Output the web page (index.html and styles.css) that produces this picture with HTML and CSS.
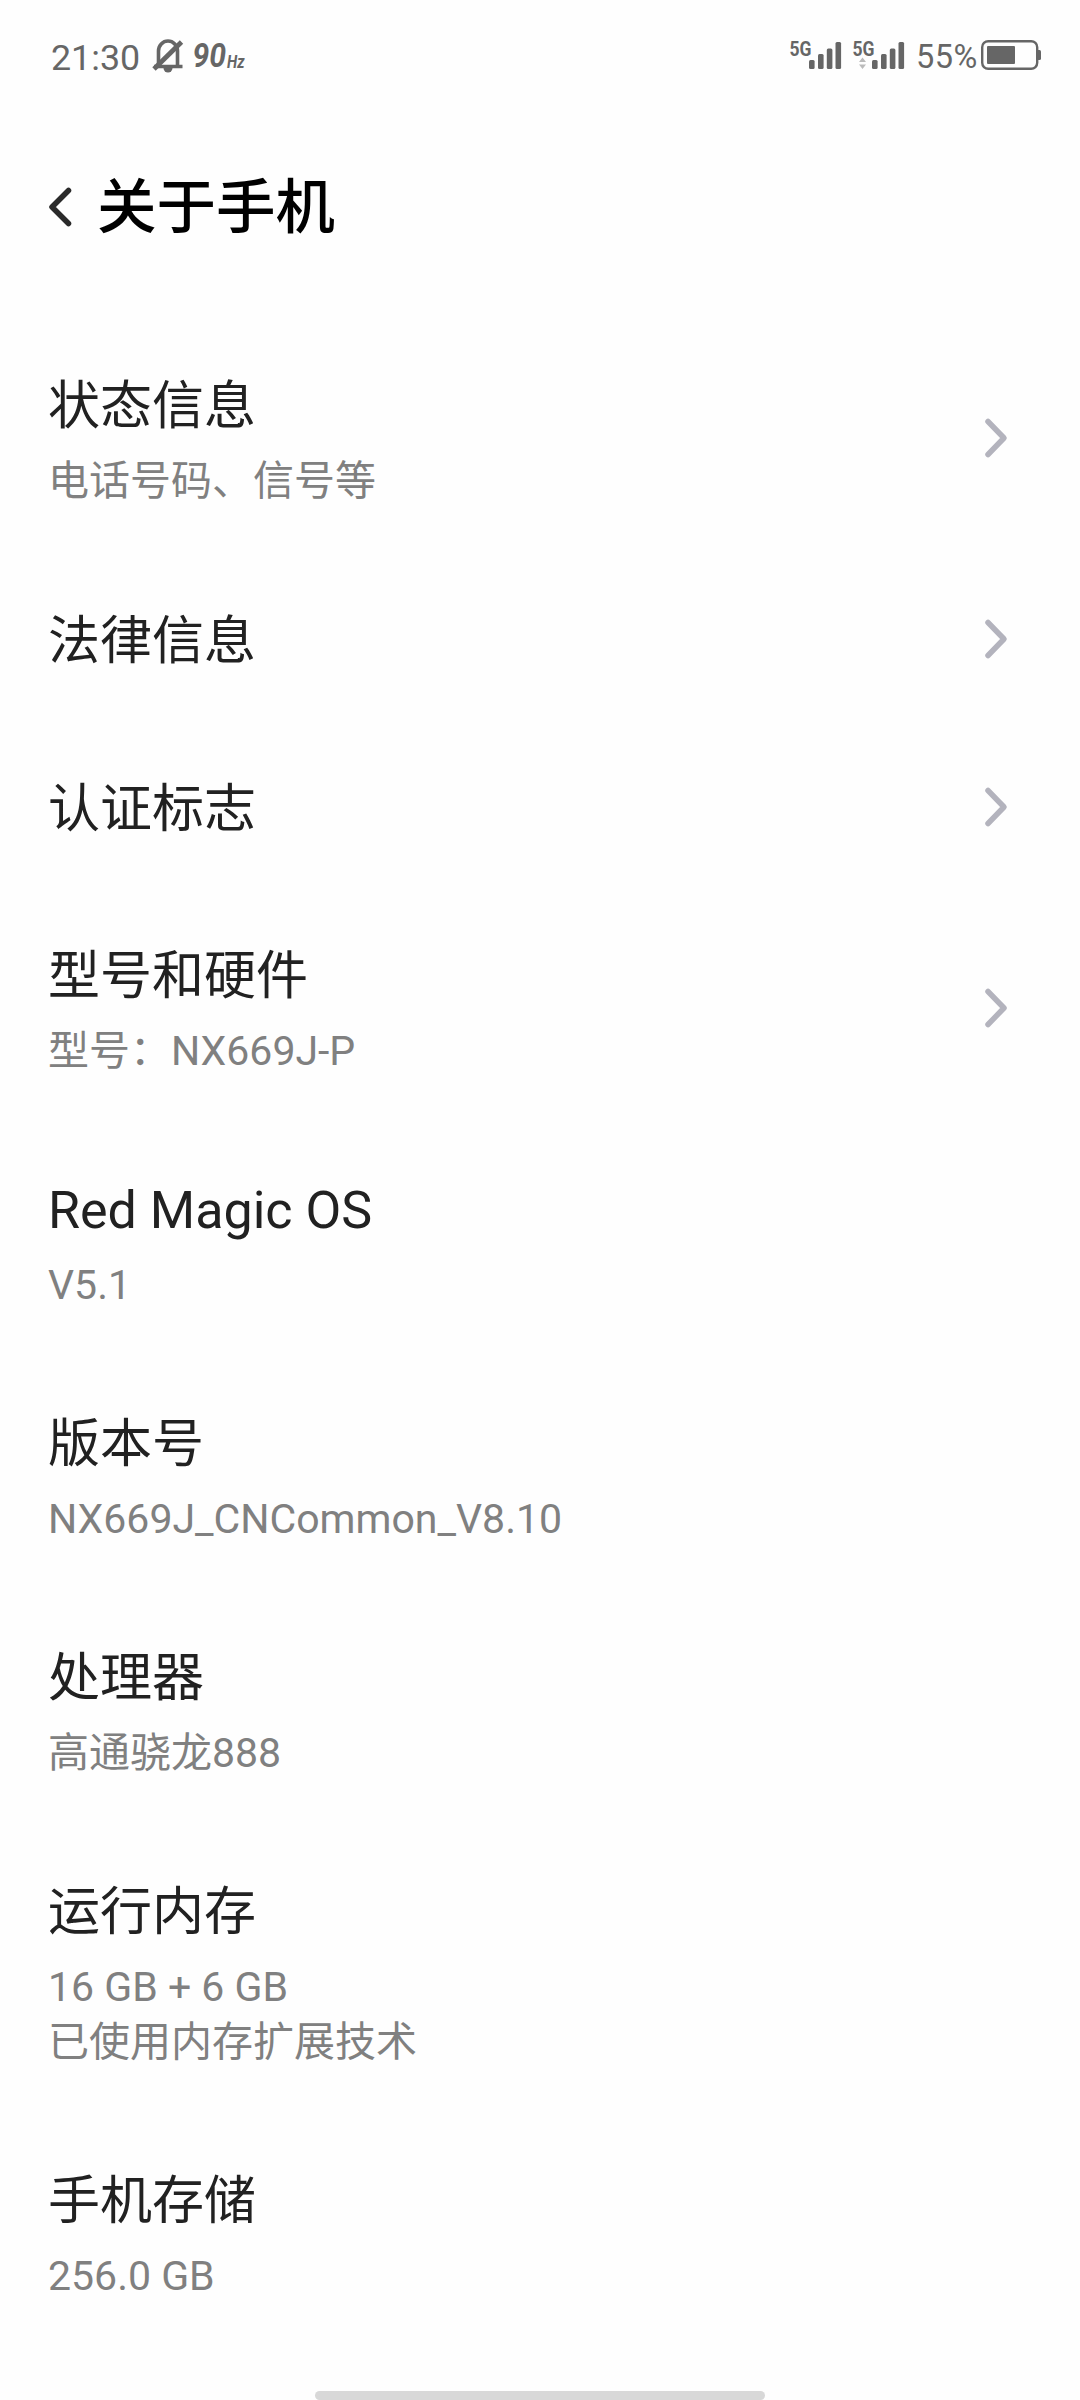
FILE: index.html
```html
<!DOCTYPE html>
<html lang="zh-CN">
<head>
<meta charset="utf-8">
<title>关于手机</title>
<link rel="stylesheet" href="styles.css">
</head>
<body>
<div class="screen">
  <div class="status-bar">
    <div class="status-left">
      <span class="clock">21:30</span>
      <svg class="icon-bell" width="32" height="36" viewBox="0 0 32 36" fill="none" stroke="#666" stroke-width="3.6">
        <path d="M5.500 28V13a9.5 10 0 0 1 19 0V28M1 28.5H29.500"/>
        <path d="M10.500 30a4.5 4.5 0 0 0 9 0z" fill="#666" stroke="none"/>
        <path d="M1 31L28.500 4" stroke-width="4.8"/>
      </svg>
      <svg class="icon-rate" width="54" height="36" viewBox="0 0 54 36" fill="#666">
        <text class="rate-value" x="-0.500" y="29" textLength="33.500" lengthAdjust="spacingAndGlyphs">90</text>
        <text class="rate-unit" x="34" y="29.500" textLength="17.5" lengthAdjust="spacingAndGlyphs">Hz</text>
      </svg>
    </div>
    <div class="status-right">
      <svg class="icon-signal" width="52" height="36" viewBox="0 -4 52 36" fill="#666">
        <text class="net" x="-0.500" y="16" textLength="22" lengthAdjust="spacingAndGlyphs">5G</text>
        <rect x="19" y="20" width="5.6" height="9" rx="1.5"/><rect x="28" y="14" width="5.6" height="15" rx="1.5"/><rect x="36.8" y="8.5" width="5.6" height="20.500" rx="1.5"/><rect x="45.500" y="2" width="5.6" height="27" rx="1.5"/>
      </svg>
      <svg class="icon-signal" width="52" height="36" viewBox="0 -4 52 36" fill="#666">
        <text class="net" x="-0.500" y="16" textLength="22" lengthAdjust="spacingAndGlyphs">5G</text>
        <path d="M6 22l3.500-4.500 3.500 4.500zM6 24.500h7l-3.500 4.500z" fill="#bbb"/>
        <rect x="19" y="20" width="5.6" height="9" rx="1.5"/><rect x="28" y="14" width="5.6" height="15" rx="1.5"/><rect x="36.8" y="8.5" width="5.6" height="20.500" rx="1.5"/><rect x="45.500" y="2" width="5.6" height="27" rx="1.5"/>
      </svg>
      <span class="percent">55%</span>
      <svg class="icon-battery" width="60" height="30" viewBox="0 0 60 30" fill="#666">
        <rect x="1.200" y="1.200" width="55" height="27.600" rx="6" fill="none" stroke="#666" stroke-width="2.400"/>
        <rect x="6" y="6" width="28" height="18" rx="1"/>
        <path d="M57 10h1.500q1.500 0 1.500 1.500v7q0 1.500-1.500 1.500H57z"/>
      </svg>
    </div>
  </div>

  <header class="header">
    <svg width="24" height="40" viewBox="0 0 24 40" fill="none" stroke="#2a2a2a" stroke-width="5.500" stroke-linecap="round" stroke-linejoin="round"><path d="M20.500 3.500L4 20L20.500 36.500"/></svg>
    <h1 class="page-title">关于手机</h1>
  </header>

  <main class="list">
    <div class="item item-double">
      <div class="text"><div class="title">状态信息</div><div class="sub">电话号码、信号等</div></div>
      <svg class="chevron" viewBox="0 0 24 40"><path d="M4 3.500L20 20L4 36.500"/></svg>
    </div>
    <div class="item item-single">
      <div class="text"><div class="title">法律信息</div></div>
      <svg class="chevron" viewBox="0 0 24 40"><path d="M4 3.500L20 20L4 36.500"/></svg>
    </div>
    <div class="item item-single">
      <div class="text"><div class="title">认证标志</div></div>
      <svg class="chevron" viewBox="0 0 24 40"><path d="M4 3.500L20 20L4 36.500"/></svg>
    </div>
    <div class="item item-double">
      <div class="text"><div class="title">型号和硬件</div><div class="sub">型号：NX669J-P</div></div>
      <svg class="chevron" viewBox="0 0 24 40"><path d="M4 3.500L20 20L4 36.500"/></svg>
    </div>
    <div class="item item-double">
      <div class="text"><div class="title">Red Magic OS</div><div class="sub">V5.1</div></div>
    </div>
    <div class="item item-double">
      <div class="text"><div class="title">版本号</div><div class="sub">NX669J_CNCommon_V8.10</div></div>
    </div>
    <div class="item item-double">
      <div class="text"><div class="title">处理器</div><div class="sub">高通骁龙888</div></div>
    </div>
    <div class="item item-triple">
      <div class="text"><div class="title">运行内存</div><div class="sub">16 GB + 6 GB<br>已使用内存扩展技术</div></div>
    </div>
    <div class="item item-double">
      <div class="text"><div class="title">手机存储</div><div class="sub">256.0 GB</div></div>
    </div>
  </main>

  <div class="home-bar"></div>
</div>
</body>
</html>
```
FILE: styles.css
```css
* {
  box-sizing: border-box;
}

body {
  margin: 0;
  background: #fefefe;
  font-family: Roboto, "Noto Sans CJK SC", sans-serif;
  color: #212121;
}

.screen {
  display: flex;
  flex-direction: column;
  width: 1080px;
  height: 2400px;
  overflow: hidden;
}

.status-bar {
  display: flex;
  justify-content: space-between;
  height: 110px;
  padding: 0 39px 0 51px;
  color: #666;
}

.status-left,
.status-right {
  display: flex;
  align-items: flex-start;
}

svg {
  overflow: visible;
}

.clock {
  width: 102px;
  padding-top: 38px;
  font-size: 35.8px;
  line-height: 41px;
  white-space: nowrap;
}

.icon-bell {
  margin-top: 38px;
}

.icon-rate {
  margin: 38px 0 0 8px;
}

.rate-value {
  font-size: 33.5px;
  font-weight: 700;
  font-style: italic;
}

.rate-unit {
  font-size: 18px;
  font-weight: 700;
  font-style: italic;
}

.icon-signal {
  margin: 36px 11px 0 0;
}

.net {
  font-size: 19.5px;
  font-weight: 700;
}

.percent {
  width: 65px;
  padding-top: 38px;
  font-size: 32.5px;
  font-weight: 400;
  line-height: 38px;
  letter-spacing: 0.5px;
  white-space: nowrap;
}

.icon-battery {
  margin-top: 40px;
}

.header {
  display: flex;
  align-items: center;
  gap: 25px;
  height: 211px;
  padding: 0 0 18px 48px;
}

.page-title {
  margin: 0;
  padding-top: 3px;
  font-size: 59.5px;
  font-weight: 500;
  line-height: 80px;
  color: #000;
}

.list {
  flex: 1;
}

.item {
  display: flex;
  justify-content: space-between;
  align-items: center;
  padding: 0 72px 0 48px;
}

.item-single {
  height: 168px;
}

.item-double {
  height: 234px;
}

.item-triple {
  height: 289px;
}

.text {
  align-self: flex-start;
  padding-top: 56px;
}

.item-single .text {
  padding-top: 57px;
}

.title {
  font-size: 52px;
  line-height: 60px;
}

.sub {
  margin-top: 17px;
  font-size: 41px;
  line-height: 55px;
  color: #808080;
}

.chevron {
  width: 24px;
  height: 40px;
  fill: none;
  stroke: #b3b3bd;
  stroke-width: 5.5;
  stroke-linecap: round;
  stroke-linejoin: round;
}

.home-bar {
  align-self: center;
  width: 450px;
  height: 9px;
  border-radius: 5px;
  background: #d8d8d8;
}
```
